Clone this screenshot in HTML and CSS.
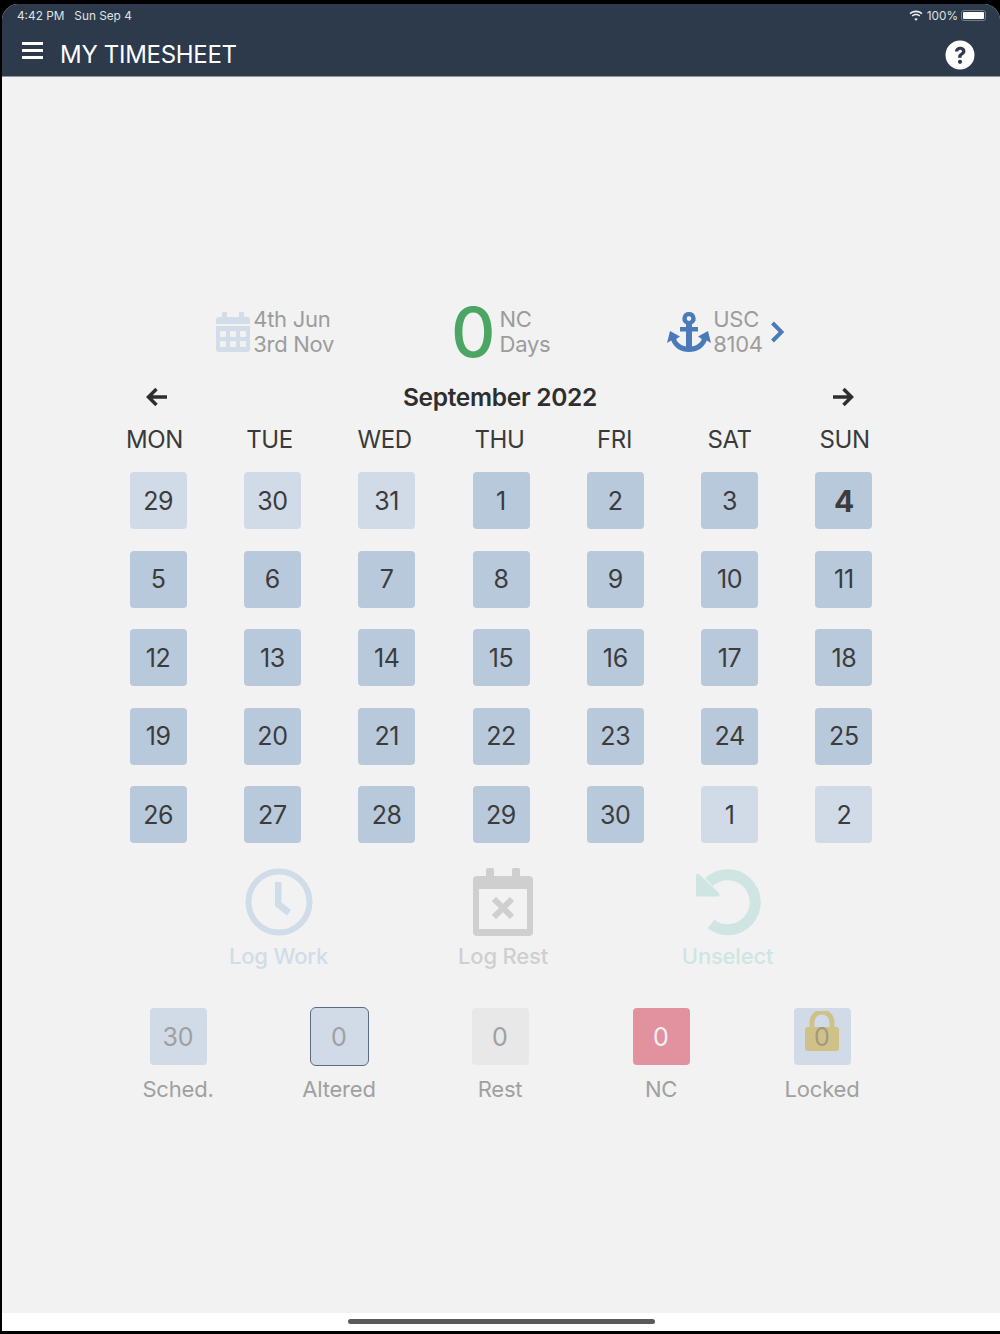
FILE: index.html
```html
<!DOCTYPE html>
<html>
	<head>
		<meta charset="utf-8">
		<title>My Timesheet</title>
		<link rel="stylesheet" href="styles.css">
	</head>
	<body>
		<div class="screen">
			<div class="topbar">
				<div class="status">
					<div class="status-time"><span>4:42 PM</span><span>Sun Sep 4</span></div>
					<div class="status-right">
						<svg class="wifi" viewBox="0 0 16 12"><path d="M8 2.2c2.4 0 4.6.9 6.2 2.5l1.2-1.3C13.500 1.500 10.900.4 8 .4S2.500 1.500.6 3.400l1.200 1.300C3.400 3.100 5.600 2.200 8 2.200zM8 5.700c1.400 0 2.700.5 3.700 1.500l1.200-1.300C11.600 4.600 9.900 3.900 8 3.900s-3.600.7-4.900 2l1.200 1.300c1-1 2.300-1.500 3.700-1.500zM8 9.100c-.8 0-1.500.3-2 .8l2 2.100 2-2.100c-.5-.5-1.200-.8-2-.8z" fill="#eef0f2"/></svg>
						<span>100%</span>
						<div class="battery"><div class="battery-level"></div></div>
					</div>
				</div>
				<div class="titlebar">
					<div class="menu-icon"><i></i><i></i><i></i></div>
					<div class="title">MY TIMESHEET</div>
					<svg class="help" viewBox="0 0 30 30">
						<circle cx="15" cy="15" r="14.500" fill="#fff"/>
						<path d="M9.800 11.500c.3-3 2.600-4.700 5.400-4.700 3 0 5.200 1.800 5.200 4.400 0 2-1.100 3-2.500 3.900-1 .7-1.400 1.100-1.400 2.100v.5h-3.400v-.8c0-1.800.8-2.800 2.200-3.700 1-.7 1.700-1.100 1.700-2 0-.9-.8-1.500-1.800-1.500-1.100 0-1.900.7-2 1.800z" fill="#2c3a4b"/>
						<circle cx="15" cy="21.800" r="2.100" fill="#2c3a4b"/>
					</svg>
				</div>
			</div>

			<div class="content">
				<div class="summary">
					<div class="summary-item">
						<svg class="icon-calendar" viewBox="0 0 34 40">
							<path d="M7 0h3a1 1 0 0 1 1 1v4h12V1a1 1 0 0 1 1-1h3a1 1 0 0 1 1 1v4h3a3 3 0 0 1 3 3v4H0V8a3 3 0 0 1 3-3h3V1a1 1 0 0 1 1-1z" fill="#d2dde9"/>
							<path d="M0 14h34v23a3 3 0 0 1-3 3H3a3 3 0 0 1-3-3z" fill="#d2dde9"/>
							<g fill="#f2f2f2">
								<rect x="4" y="19" width="6" height="6" rx="1"/><rect x="14" y="19" width="6" height="6" rx="1"/><rect x="24" y="19" width="6" height="6" rx="1"/>
								<rect x="4" y="29" width="6" height="6" rx="1"/><rect x="14" y="29" width="6" height="6" rx="1"/><rect x="24" y="29" width="6" height="6" rx="1"/>
							</g>
						</svg>
						<div class="summary-text">4th Jun<br>3rd Nov</div>
					</div>
					<div class="summary-item">
						<div class="nc-count">0</div>
						<div class="summary-text">NC<br>Days</div>
					</div>
					<div class="summary-item">
						<svg class="icon-anchor" viewBox="0 0 44 40">
							<path d="M22 0a6.500 6.500 0 0 1 3 12.300V15h6v4.500h-6v15c5-.7 8.500-3.600 9.800-7.400L31 24.500 41 19l3 12-4.200-2.500C37 35.500 30.500 40 22 40S7 35.500 4.200 28.500L0 31l3-12 10 5.500-3.800 2.600c1.300 3.800 4.800 6.700 9.800 7.400v-15h-6V15h6v-2.700A6.500 6.500 0 0 1 22 0zm0 4.300a2.300 2.300 0 1 0 0 4.600 2.300 2.300 0 0 0 0-4.600z" fill="#4a7ab8"/>
						</svg>
						<div class="summary-text">USC<br>8104</div>
						<svg class="icon-chevron" viewBox="0 0 14 22"><path d="M2.500 2l9 9-9 9" fill="none" stroke="#4a7ab8" stroke-width="4"/></svg>
					</div>
				</div>

				<div class="month-nav">
					<svg class="arrow" viewBox="0 0 22 20"><path d="M10.500 2l-8 8 8 8M3 10H21" fill="none" stroke="#2e2e2e" stroke-width="3.500"/></svg>
					<div class="month-title">September 2022</div>
					<svg class="arrow" viewBox="0 0 22 20"><path d="M11.500 2l8 8-8 8M19 10H1" fill="none" stroke="#2e2e2e" stroke-width="3.500"/></svg>
				</div>

				<div class="weekdays">
					<div>MON</div><div>TUE</div><div>WED</div><div>THU</div><div>FRI</div><div>SAT</div><div>SUN</div>
				</div>

				<div class="days">
					<div class="day other">29</div><div class="day other">30</div><div class="day other">31</div><div class="day">1</div><div class="day">2</div><div class="day">3</div><div class="day today">4</div>
					<div class="day">5</div><div class="day">6</div><div class="day">7</div><div class="day">8</div><div class="day">9</div><div class="day">10</div><div class="day">11</div>
					<div class="day">12</div><div class="day">13</div><div class="day">14</div><div class="day">15</div><div class="day">16</div><div class="day">17</div><div class="day">18</div>
					<div class="day">19</div><div class="day">20</div><div class="day">21</div><div class="day">22</div><div class="day">23</div><div class="day">24</div><div class="day">25</div>
					<div class="day">26</div><div class="day">27</div><div class="day">28</div><div class="day">29</div><div class="day">30</div><div class="day other">1</div><div class="day other">2</div>
				</div>

				<div class="actions">
					<div class="action work">
						<svg viewBox="0 0 68 68">
							<circle cx="34" cy="34" r="30.500" fill="none" stroke="#d1dce9" stroke-width="6"/>
							<path d="M30 14h5.500a1 1 0 0 1 1 1v19.500l9.500 7.500-4 5.500-12-9.500z" fill="#d1dce9"/>
						</svg>
						<div class="action-label">Log Work</div>
					</div>
					<div class="action rest">
						<svg viewBox="0 0 68 68">
							<rect x="17" y="0" width="8" height="14" rx="1.500" fill="#cfcfcf"/>
							<rect x="43" y="0" width="8" height="14" rx="1.500" fill="#cfcfcf"/>
							<rect x="4" y="8" width="60" height="60" rx="4" fill="#cfcfcf"/>
							<rect x="10" y="21" width="48" height="40" fill="#f2f2f2"/>
							<path d="M25 31l18 18M43 31L25 49" stroke="#cfcfcf" stroke-width="6" stroke-linejoin="round"/>
						</svg>
						<div class="action-label">Log Rest</div>
					</div>
					<div class="action undo">
						<svg viewBox="0 0 68 68">
							<path d="M15 14A27.500 27.500 0 1 1 17 56" fill="none" stroke="#cee5e2" stroke-width="11"/>
							<path d="M2 8C2 6 4 5 5.500 6.500L25 25c1.300 1.400.5 3.500-1.500 3.500H4a2 2 0 0 1-2-2z" fill="#cee5e2"/>
						</svg>
						<div class="action-label">Unselect</div>
					</div>
				</div>

				<div class="legend">
					<div class="legend-item">
						<div class="legend-box sched">30</div>
						<div class="legend-label">Sched.</div>
					</div>
					<div class="legend-item">
						<div class="legend-box altered">0</div>
						<div class="legend-label">Altered</div>
					</div>
					<div class="legend-item">
						<div class="legend-box rest-box">0</div>
						<div class="legend-label">Rest</div>
					</div>
					<div class="legend-item">
						<div class="legend-box nc">0</div>
						<div class="legend-label">NC</div>
					</div>
					<div class="legend-item">
						<div class="legend-box sched locked">
							<svg class="lock" viewBox="0 0 34 40">
								<path d="M7 16V11a10 10 0 0 1 20 0v5" fill="none" stroke="#cfc188" stroke-width="5"/>
								<rect x="0" y="16" width="34" height="24" rx="3" fill="#cfc188"/>
							</svg>
							<span class="lock-count">0</span>
						</div>
						<div class="legend-label">Locked</div>
					</div>
				</div>
			</div>

			<div class="home-bar"><div class="home-indicator"></div></div>
		</div>
	</body>
</html>
```

FILE: styles.css
```css
html, body {height: 100%;}
body {padding: 4px 0 3px 2px; margin: 0; border: 0; box-sizing: border-box; background-color: #000; overflow: hidden; font-family: Inter, "Liberation Sans", sans-serif;}

.screen {display: flex; flex-direction: column; height: 100%; background-color: #f2f2f2; border-radius: 16px 16px 0 0; overflow: hidden;}

/* top bar */
.topbar {flex: none; height: 73px; box-sizing: border-box; background-color: #2c3a4b; color: #fff; border-bottom: 1px solid #8d96a1;}
.status {display: flex; justify-content: space-between; align-items: center; height: 23px; padding: 0 14px 0 15px; font-size: 11.800px; color: #dfe2e5;}
.status-time {display: flex; gap: 10px;}
.status-right {display: flex; align-items: center; gap: 3px;}
.wifi {width: 14px; height: 11px; margin-right: 1px;}
.battery {width: 25px; height: 11px; box-sizing: border-box; padding: 1px; border: 1px solid #737d89; border-radius: 3px;}
.battery-level {height: 100%; background-color: #fff; border-radius: 1px;}

.titlebar {display: flex; align-items: center; padding: 0 25px 0 20px; margin-top: 5px; height: 44px;}
.menu-icon {display: flex; flex-direction: column; gap: 4px; width: 21px; margin-right: 17px; margin-bottom: 7px;}
.menu-icon i {display: block; height: 3px; background-color: #fff;}
.title {flex: 1; font-size: 24px; letter-spacing: -0.300px; margin-top: 1px;}
.help {width: 30px; height: 30px; margin-top: 1px;}

/* main */
.content {flex: 1;}

.summary {display: flex; justify-content: center; gap: 117px; margin: 228px 0 0 -2px; height: 54px;}
.summary-item {display: flex; align-items: center; color: #9c9c9c;}
.summary-text {font-size: 22px; line-height: 25px; letter-spacing: -0.300px;}
.icon-calendar {width: 34px; height: 40px; margin-right: 3px;}
.nc-count {font-size: 69px; line-height: 54px; font-weight: 500; color: #4ba664; margin-right: 4px;}
.icon-anchor {width: 44px; height: 40px; margin-right: 2px;}
.icon-chevron {width: 14px; height: 22px; margin-left: 7px;}

.month-nav {display: flex; justify-content: space-between; align-items: center; padding: 0 146px 0 144px; margin-top: 19px; height: 38px;}
.arrow {width: 22px; height: 20px;}
.month-title {font-size: 24.500px; font-weight: 600; letter-spacing: -0.300px; color: #2e2e2e;}

.weekdays {display: grid; grid-template-columns: repeat(7, 115px); justify-content: center; margin: 7px 0 0 -3px; height: 34px; line-height: 34px; text-align: center; font-size: 24px; letter-spacing: -0.400px; color: #3a3a3a;}

.days {display: grid; grid-template-columns: repeat(7, 57px); gap: 21.500px 57.300px; justify-content: center; margin-top: 15px;}
.day {height: 57px; display: flex; align-items: center; justify-content: center; background-color: #b8c9dc; border-radius: 4px; font-size: 25px; letter-spacing: -0.400px; color: #3c3c3c;}
.day.other {background-color: #d1dbe8;}
.day.today {font-size: 30px; font-weight: 700;}

.actions {display: grid; grid-template-columns: repeat(3, 224.500px); justify-content: center; margin: 25px 0 0 4px;}
.action {display: flex; flex-direction: column; align-items: center;}
.action svg {width: 68px; height: 68px;}
.action-label {margin-top: 6px; font-size: 22px; line-height: 28px; font-weight: 500; letter-spacing: -0.200px;}
.work .action-label {color: #d1dce9;}
.rest .action-label {color: #cfcfcf;}
.undo .action-label {color: #cee5e2;}

.legend {display: grid; grid-template-columns: repeat(5, 161px); justify-content: center; margin: 38px 0 0 -2px;}
.legend-item {display: flex; flex-direction: column; align-items: center; color: #a0a0a0;}
.legend-box {position: relative; width: 57px; height: 57px; box-sizing: border-box; display: flex; align-items: center; justify-content: center; border-radius: 4px; font-size: 25px;}
.legend-label {margin-top: 9px; font-size: 22px; line-height: 30px; letter-spacing: -0.200px;}
.sched {background-color: #d1dbe8;}
.altered {background-color: #d1dbe8; border: 1.500px solid #5c6c80; width: 59px; height: 59px; margin: -1px 0; border-radius: 6px;}
.rest-box {background-color: #e8e8e8;}
.nc {background-color: #e2919f; color: #f5f0f1;}
.lock {position: absolute; left: 11px; top: 3px; width: 34px; height: 40px;}
.lock-count {position: relative; color: #a09a84;}

/* home indicator */
.home-bar {flex: none; height: 18px; background-color: #fff; position: relative;}
.home-indicator {position: absolute; left: 346px; top: 6px; width: 307px; height: 5px; background-color: #5a5a5a; border-radius: 3px;}
```
